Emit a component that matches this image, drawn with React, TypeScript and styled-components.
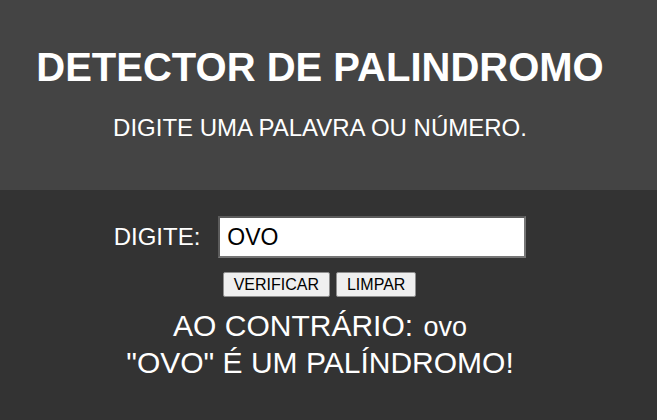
import React, { useState } from "react";
import styled, { createGlobalStyle } from "styled-components";

const GlobalStyle = createGlobalStyle`
  html, body {
    margin: 0;
    padding: 0;
    background: #333333;
  }
  body {
    font-family: "Liberation Sans", Arial, sans-serif;
    color: #ffffff;
  }
`;

const Page = styled.div`
  min-height: 100vh;
  display: flex;
  flex-direction: column;
  background: #333333;
`;

const Header = styled.header`
  background: #444444;
  display: flex;
  flex-direction: column;
  align-items: center;
  padding: 44px 17px 48px 0;
  height: 190px;
  box-sizing: border-box;
`;

const Title = styled.h1`
  margin: 0 0 24px;
  font-size: 40px;
  font-weight: 700;
  line-height: 46px;
  color: #ffffff;
`;

const Subtitle = styled.p`
  margin: 0;
  font-size: 24px;
  line-height: 28px;
  color: #ffffff;
`;

const Main = styled.main`
  display: flex;
  flex-direction: column;
  align-items: center;
  padding: 26px 17px 0 0;
`;

const InputRow = styled.div`
  display: flex;
  align-items: center;
  gap: 18px;
`;

const Label = styled.label`
  font-size: 24px;
  color: #ffffff;
`;

const TextInput = styled.input`
  width: 308px;
  height: 42px;
  box-sizing: border-box;
  border: 2px solid #767676;
  border-top-color: #5c5c5c;
  border-left-color: #5c5c5c;
  background: #ffffff;
  color: #000000;
  font-family: "Liberation Sans", Arial, sans-serif;
  font-size: 23px;
  padding: 0 7px;
  outline: none;
`;

const ButtonRow = styled.div`
  display: flex;
  gap: 6px;
  margin-top: 14px;
  margin-left: -1px;
`;

const Button = styled.button`
  font-family: "Liberation Sans", Arial, sans-serif;
  font-size: 16px;
  line-height: 19px;
  color: #000000;
  background: #efefef;
  border: 1px solid #8f8f8f;
  border-radius: 2px;
  padding: 2px 10px;
  cursor: pointer;
`;

const Result = styled.div`
  margin-top: 11px;
  font-size: 30px;
  line-height: 35px;
  text-align: center;
  color: #ffffff;
`;

const Line = styled.p`
  margin: 0;
`;

const Reversed = styled.span`
  font-size: 27px;
  margin-left: 2px;
`;

export default function App() {
  const [value, setValue] = useState("OVO");
  const reversed = value.split("").reverse().join("").toLowerCase();
  return (
    <>
      <GlobalStyle />
      <Page>
        <Header>
          <Title>DETECTOR DE PALINDROMO</Title>
          <Subtitle>DIGITE UMA PALAVRA OU NÚMERO.</Subtitle>
        </Header>
        <Main>
          <InputRow>
            <Label htmlFor="palavra">DIGITE:</Label>
            <TextInput
              id="palavra"
              value={value}
              onChange={(e) => setValue(e.target.value)}
            />
          </InputRow>
          <ButtonRow>
            <Button>VERIFICAR</Button>
            <Button onClick={() => setValue("")}>LIMPAR</Button>
          </ButtonRow>
          <Result>
            <Line>
              AO CONTRÁRIO: <Reversed>{reversed}</Reversed>
            </Line>
            <Line>"{value}" É UM PALÍNDROMO!</Line>
          </Result>
        </Main>
      </Page>
    </>
  );
}
